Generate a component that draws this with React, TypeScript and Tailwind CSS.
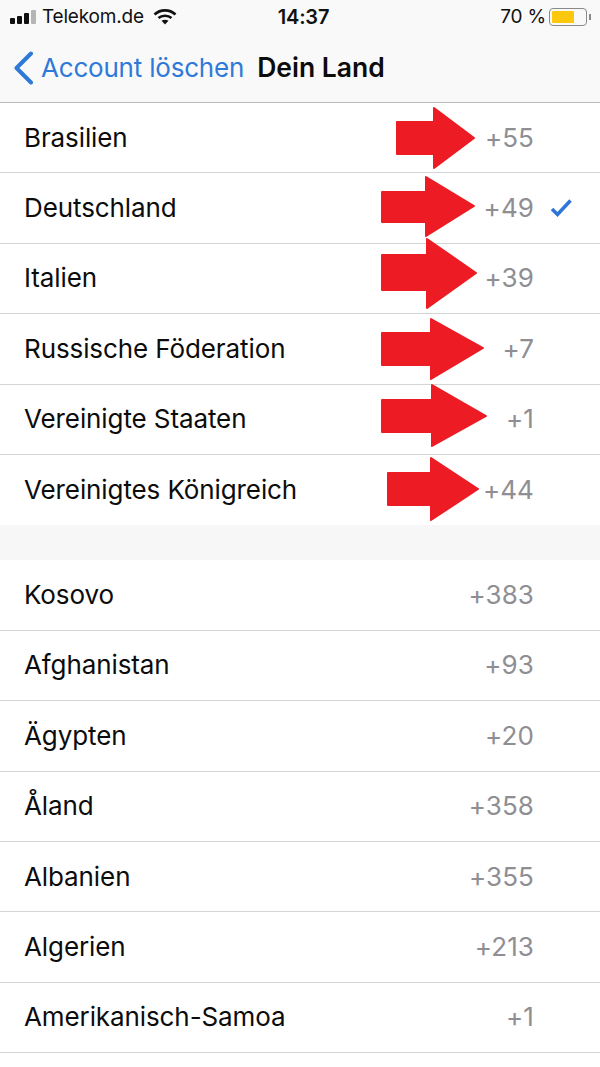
import React from 'react';

const pinned = [
  { name: 'Brasilien', code: '+55' },
  { name: 'Deutschland', code: '+49', checked: true },
  { name: 'Italien', code: '+39' },
  { name: 'Russische Föderation', code: '+7' },
  { name: 'Vereinigte Staaten', code: '+1' },
  { name: 'Vereinigtes Königreich', code: '+44' },
];

const countries = [
  { name: 'Kosovo', code: '+383' },
  { name: 'Afghanistan', code: '+93' },
  { name: 'Ägypten', code: '+20' },
  { name: 'Åland', code: '+358' },
  { name: 'Albanien', code: '+355' },
  { name: 'Algerien', code: '+213' },
  { name: 'Amerikanisch-Samoa', code: '+1' },
];

// red annotation arrows: left, neck x, tip x, top, shaft top, tip y, shaft bottom, bottom
const arrows = [
  [397, 434, 474, 108, 122, 138, 154, 168],
  [382, 426, 474, 177, 192, 206, 222, 236],
  [382, 427, 476, 239, 255, 273, 290, 308],
  [382, 431, 483, 319, 333, 348, 365, 379],
  [382, 432, 486, 385, 400, 416, 432, 446],
  [388, 431, 478, 458, 473, 489, 505, 520],
];

const Row: React.FC<{ name: string; code: string; checked?: boolean; line?: boolean }> = ({ name, code, checked, line }) => (
  <div className={line ? 'h-[70.4px] flex items-center pl-[24px] pb-[1px] border-b border-[#d4d4d6]' : 'h-[70.4px] flex items-center pl-[24px] pb-[1px]'}>
    <span className="flex-1 text-[26px] tracking-[-0.1px] text-[#0c0c0c]">{name}</span>
    <span className="text-[26px] tracking-[0.1px] text-[#8e8e93] mr-[66px] relative">
      {code}
      {checked && (
        <svg className="absolute -right-[38px] top-1/2 -translate-y-1/2" width="22" height="18" viewBox="0 0 22 18" fill="none">
          <path d="M2 10 L7.5 15.5 L20.5 1.5" stroke="#2f74d8" strokeWidth="3.5" />
        </svg>
      )}
    </span>
  </div>
);

export default function App() {
  return (
    <div className="relative w-[600px] h-[1067px] overflow-hidden bg-white font-['Inter',sans-serif]">
      <div className="h-[103px] bg-[#f9f9f9] border-b border-[#b9b9bb] flex flex-col">
        <div className="h-[33px] pl-[10px] pr-[9px] flex items-center justify-between text-[19px] text-[#111]">
          <div className="flex items-center gap-[6px] w-[205px]">
            <div className="flex items-end gap-[2px]">
              <span className="w-[5px] h-[6px] rounded-[1px] bg-[#111]" />
              <span className="w-[5px] h-[8px] rounded-[1px] bg-[#111]" />
              <span className="w-[5px] h-[11px] rounded-[1px] bg-[#111]" />
              <span className="w-[5px] h-[14px] rounded-[1px] bg-[#b5b5b5]" />
            </div>
            <span className="tracking-[-0.2px] pt-[2px]">Telekom.de</span>
            <svg className="ml-[3px]" width="24" height="17" viewBox="0 0 24 17" fill="none">
              <path d="M1.5 6.5 C7.5 1 16.5 1 22.5 6.5" stroke="#111" strokeWidth="2.6" />
              <path d="M5.5 10 C9 7 15 7 18.5 10" stroke="#111" strokeWidth="2.6" />
              <path d="M12 16.5 L8.5 12.8 C10.5 11.4 13.5 11.4 15.5 12.8 Z" fill="#111" />
            </svg>
          </div>
          <span className="text-[20px] font-semibold tracking-[-0.2px]">14:37</span>
          <div className="flex items-center justify-end gap-[3px] w-[199px]">
            <span className="tracking-[-0.2px] pt-[2px]">70 %</span>
            <div className="flex items-center gap-[2px]">
              <div className="w-[38px] h-[18px] rounded-[4px] border border-[#8a8a8a] p-[2px] pr-[12px]">
                <div className="w-full h-full bg-[#fcc80e] rounded-[1px]" />
              </div>
              <span className="w-[2px] h-[6px] bg-[#8a8a8a]" />
            </div>
          </div>
        </div>
        <div className="flex-1 flex items-center pl-[13px]">
          <svg className="mr-[7px]" width="21" height="34" viewBox="0 0 21 34" fill="none">
            <path d="M18 2.5 L3.5 17 L18 31.5" stroke="#2f7ad9" strokeWidth="4" strokeLinecap="round" strokeLinejoin="round" />
          </svg>
          <span className="text-[26px] tracking-[-0.2px] text-[#2f7ad9]">Account löschen</span>
          <span className="ml-[13px] text-[26.5px] font-semibold text-[#0c0c0c]">Dein Land</span>
        </div>
      </div>

      <div>
        {pinned.map((c, i) => (
          <Row key={c.name} {...c} line={i < pinned.length - 1} />
        ))}
      </div>
      <div className="h-[35px] bg-[#f7f7f7]" />
      <div>
        {countries.map((c) => (
          <Row key={c.name} {...c} line />
        ))}
      </div>

      {arrows.map(([l, n, t, top, st, y, sb, b]) => (
        <svg key={top} className="absolute left-0 top-0 pointer-events-none" width="600" height="1067">
          <polygon
            points={`${l},${st} ${n},${st} ${n},${top} ${t},${y} ${n},${b} ${n},${sb} ${l},${sb}`}
            fill="#ed1c24"
            stroke="#ed1c24"
            strokeWidth="2"
            strokeLinejoin="round"
          />
        </svg>
      ))}
    </div>
  );
}
